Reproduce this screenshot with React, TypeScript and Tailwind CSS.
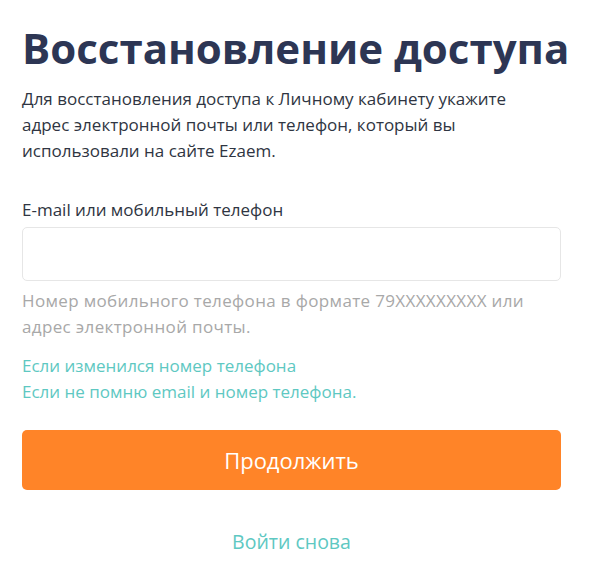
import React from "react";

export default function App() {
  return (
    <div
      className="w-[600px] h-[565px] bg-white pl-[22px] pr-[39px] pt-[22px] overflow-hidden"
      style={{ fontFamily: "'Open Sans', 'Noto Sans', sans-serif" }}
    >
      <h1 className="text-[42px] leading-[52px] font-bold text-[#2d3654] whitespace-nowrap">
        Восстановление доступа
      </h1>
      <p className="mt-[12px] text-[17px] leading-[26px] text-[#2f3542] w-[510px]">
        Для восстановления доступа к Личному кабинету укажите адрес электронной почты или телефон, который вы использовали на сайте Ezaem.
      </p>
      <div className="mt-[33px] text-[17px] leading-[26px] text-[#2f3542]">
        E-mail или мобильный телефон
      </div>
      <input
        className="mt-[4px] block w-full h-[54px] border border-[#e6e6e6] rounded-[5px] bg-white outline-none px-3"
        type="text"
      />
      <p className="mt-[7px] text-[17px] leading-[26px] tracking-[0.35px] text-[#a8a8a8] w-[530px]">
        Номер мобильного телефона в формате 79XXXXXXXXX или адрес электронной почты.
      </p>
      <div className="mt-[13px] flex flex-col text-[17px] leading-[25.5px] text-[#5ec8c2]">
        <a>Если изменился номер телефона</a>
        <a>Если не помню email и номер телефона.</a>
      </div>
      <button className="mt-[26px] w-full h-[60px] rounded-[5px] bg-[#ff8428] text-white text-[22px]">
        Продолжить
      </button>
      <div className="mt-[39px] text-center text-[19.5px] leading-[26px] text-[#5ec8c2]">
        Войти снова
      </div>
    </div>
  );
}
